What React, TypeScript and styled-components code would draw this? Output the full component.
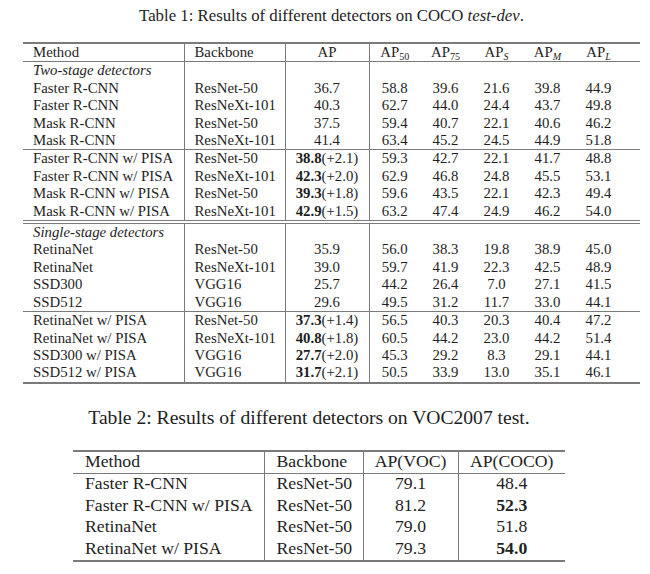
import React from "react";
import styled, { createGlobalStyle } from "styled-components";

const GlobalStyle = createGlobalStyle`
  html, body { margin: 0; padding: 0; background: #ffffff; }
  body { font-family: "Liberation Serif", "Times New Roman", serif; color: #1e1e1e; }
`;

const Page = styled.div`
  width: 650px;
  height: 574px;
  overflow: hidden;
  display: flex;
  flex-direction: column;
`;

const Figure = styled.section<{ $left: number; $width: number }>`
  display: flex;
  flex-direction: column;
  margin-left: ${(p) => p.$left}px;
  width: ${(p) => p.$width}px;
`;

const Caption = styled.div<{ $size: number; $shift: number; $top: number; $gap: number }>`
  font-size: ${(p) => p.$size}px;
  line-height: 22px;
  text-align: center;
  white-space: nowrap;
  margin-top: ${(p) => p.$top}px;
  margin-bottom: ${(p) => p.$gap}px;
  transform: translateX(${(p) => p.$shift}px);
`;

const Table = styled.table<{ $size: number; $row: number; $lift: number }>`
  border-collapse: collapse;
  table-layout: fixed;
  width: 100%;
  font-size: ${(p) => p.$size}px;
  line-height: ${(p) => p.$row - p.$lift * 2}px;
  border-top: 2px solid #7a7a7a;
  border-bottom: 2px solid #7a7a7a;
  td, th {
    height: ${(p) => p.$row}px;
    padding-top: 0;
    padding-bottom: ${(p) => p.$lift * 2}px;
    white-space: nowrap;
    font-weight: normal;
    box-sizing: border-box;
  }
`;

const Head = styled.thead`
  tr { border-bottom: 1px solid #7a7a7a; }
`;

const Group = styled.tbody<{ $double?: boolean }>`
  border-top: ${(p) => (p.$double ? "4px double #7a7a7a" : "1px solid #7a7a7a")};
`;

const Cell = styled.td<{ $align?: "left" | "center"; $pad?: number; $rule?: boolean; $padRight?: number }>`
  text-align: ${(p) => p.$align ?? "center"};
  padding-left: ${(p) => p.$pad ?? 0}px !important;
  padding-right: ${(p) => p.$padRight ?? 0}px !important;
  border-left: ${(p) => (p.$rule ? "1px solid #7a7a7a" : "none")};
`;

const HeadCell = styled(Cell).attrs({ as: "th" })``;

const GroupTitle = styled.span`
  font-style: italic;
`;

const Strong = styled.b`
  font-weight: bold;
`;

const Sub = styled.sub<{ $italic?: boolean }>`
  font-size: 0.68em;
  vertical-align: -0.25em;
  line-height: 0;
  font-style: ${(p) => (p.$italic ? "italic" : "normal")};
`;

const Em = styled.i`
  font-style: italic;
`;

type Row1 = { m: string; b: string; ap: string; gain?: string; v: string[] };

const groups: { title?: string; double?: boolean; rows: Row1[] }[] = [
  {
    title: "Two-stage detectors",
    rows: [
      { m: "Faster R-CNN", b: "ResNet-50", ap: "36.7", v: ["58.8", "39.6", "21.6", "39.8", "44.9"] },
      { m: "Faster R-CNN", b: "ResNeXt-101", ap: "40.3", v: ["62.7", "44.0", "24.4", "43.7", "49.8"] },
      { m: "Mask R-CNN", b: "ResNet-50", ap: "37.5", v: ["59.4", "40.7", "22.1", "40.6", "46.2"] },
      { m: "Mask R-CNN", b: "ResNeXt-101", ap: "41.4", v: ["63.4", "45.2", "24.5", "44.9", "51.8"] },
    ],
  },
  {
    rows: [
      { m: "Faster R-CNN w/ PISA", b: "ResNet-50", ap: "38.8", gain: "(+2.1)", v: ["59.3", "42.7", "22.1", "41.7", "48.8"] },
      { m: "Faster R-CNN w/ PISA", b: "ResNeXt-101", ap: "42.3", gain: "(+2.0)", v: ["62.9", "46.8", "24.8", "45.5", "53.1"] },
      { m: "Mask R-CNN w/ PISA", b: "ResNet-50", ap: "39.3", gain: "(+1.8)", v: ["59.6", "43.5", "22.1", "42.3", "49.4"] },
      { m: "Mask R-CNN w/ PISA", b: "ResNeXt-101", ap: "42.9", gain: "(+1.5)", v: ["63.2", "47.4", "24.9", "46.2", "54.0"] },
    ],
  },
  {
    title: "Single-stage detectors",
    double: true,
    rows: [
      { m: "RetinaNet", b: "ResNet-50", ap: "35.9", v: ["56.0", "38.3", "19.8", "38.9", "45.0"] },
      { m: "RetinaNet", b: "ResNeXt-101", ap: "39.0", v: ["59.7", "41.9", "22.3", "42.5", "48.9"] },
      { m: "SSD300", b: "VGG16", ap: "25.7", v: ["44.2", "26.4", "7.0", "27.1", "41.5"] },
      { m: "SSD512", b: "VGG16", ap: "29.6", v: ["49.5", "31.2", "11.7", "33.0", "44.1"] },
    ],
  },
  {
    rows: [
      { m: "RetinaNet w/ PISA", b: "ResNet-50", ap: "37.3", gain: "(+1.4)", v: ["56.5", "40.3", "20.3", "40.4", "47.2"] },
      { m: "RetinaNet w/ PISA", b: "ResNeXt-101", ap: "40.8", gain: "(+1.8)", v: ["60.5", "44.2", "23.0", "44.2", "51.4"] },
      { m: "SSD300 w/ PISA", b: "VGG16", ap: "27.7", gain: "(+2.0)", v: ["45.3", "29.2", "8.3", "29.1", "44.1"] },
      { m: "SSD512 w/ PISA", b: "VGG16", ap: "31.7", gain: "(+2.1)", v: ["50.5", "33.9", "13.0", "35.1", "46.1"] },
    ],
  },
];

const voc = [
  { m: "Faster R-CNN", b: "ResNet-50", voc: "79.1", coco: "48.4", best: false },
  { m: "Faster R-CNN w/ PISA", b: "ResNet-50", voc: "81.2", coco: "52.3", best: true },
  { m: "RetinaNet", b: "ResNet-50", voc: "79.0", coco: "51.8", best: false },
  { m: "RetinaNet w/ PISA", b: "ResNet-50", voc: "79.3", coco: "54.0", best: true },
];

const cols1 = [161, 101, 84, 51, 51, 51, 51, 67];
const cols2 = [191, 99, 95, 107];

const LAST_PAD = 16;

function CocoTable() {
  return (
    <Figure $left={23} $width={617}>
      <Caption $size={16.8} $shift={0} $top={5} $gap={15}>
        Table 1: Results of different detectors on COCO <Em>test-dev</Em>.
      </Caption>
      <Table $size={14.8} $row={17.4} $lift={0}>
        <colgroup>
          {cols1.map((w, i) => (
            <col key={i} style={{ width: w }} />
          ))}
        </colgroup>
        <Head>
          <tr>
            <HeadCell $align="left" $pad={10}>Method</HeadCell>
            <HeadCell $align="left" $pad={10} $rule>Backbone</HeadCell>
            <HeadCell $rule>AP</HeadCell>
            <HeadCell $rule>AP<Sub>50</Sub></HeadCell>
            <HeadCell>AP<Sub>75</Sub></HeadCell>
            <HeadCell>AP<Sub $italic>S</Sub></HeadCell>
            <HeadCell>AP<Sub $italic>M</Sub></HeadCell>
            <HeadCell $padRight={LAST_PAD}>AP<Sub $italic>L</Sub></HeadCell>
          </tr>
        </Head>
        {groups.map((g, gi) => (
          <Group key={gi} $double={g.double}>
            {g.title && (
              <tr>
                <Cell $align="left" $pad={10}><GroupTitle>{g.title}</GroupTitle></Cell>
                <Cell $rule />
                <Cell $rule />
                <Cell $rule />
                <Cell />
                <Cell />
                <Cell />
                <Cell />
              </tr>
            )}
            {g.rows.map((r, ri) => (
              <tr key={ri}>
                <Cell $align="left" $pad={10}>{r.m}</Cell>
                <Cell $align="left" $pad={10} $rule>{r.b}</Cell>
                <Cell $rule>
                  {r.gain ? (
                    <>
                      <Strong>{r.ap}</Strong>
                      {r.gain}
                    </>
                  ) : (
                    r.ap
                  )}
                </Cell>
                {r.v.map((v, vi) => (
                  <Cell key={vi} $rule={vi === 0} $padRight={vi === 4 ? LAST_PAD : 0}>{v}</Cell>
                ))}
              </tr>
            ))}
          </Group>
        ))}
      </Table>
    </Figure>
  );
}

function VocTable() {
  return (
    <Figure $left={73} $width={492}>
      <Caption $size={19.6} $shift={-10} $top={23} $gap={21}>
        Table 2: Results of different detectors on VOC2007 test.
      </Caption>
      <Table $size={17.7} $row={21.5} $lift={1}>
        <colgroup>
          {cols2.map((w, i) => (
            <col key={i} style={{ width: w }} />
          ))}
        </colgroup>
        <Head>
          <tr>
            <HeadCell $align="left" $pad={12}>Method</HeadCell>
            <HeadCell $align="left" $pad={12} $rule>Backbone</HeadCell>
            <HeadCell $rule>AP(VOC)</HeadCell>
            <HeadCell $rule>AP(COCO)</HeadCell>
          </tr>
        </Head>
        <tbody>
          {voc.map((r, i) => (
            <tr key={i}>
              <Cell $align="left" $pad={12}>{r.m}</Cell>
              <Cell $align="left" $pad={12} $rule>{r.b}</Cell>
              <Cell $rule>{r.voc}</Cell>
              <Cell $rule>{r.best ? <Strong>{r.coco}</Strong> : r.coco}</Cell>
            </tr>
          ))}
        </tbody>
      </Table>
    </Figure>
  );
}

export default function App() {
  return (
    <>
      <GlobalStyle />
      <Page>
        <CocoTable />
        <VocTable />
      </Page>
    </>
  );
}
